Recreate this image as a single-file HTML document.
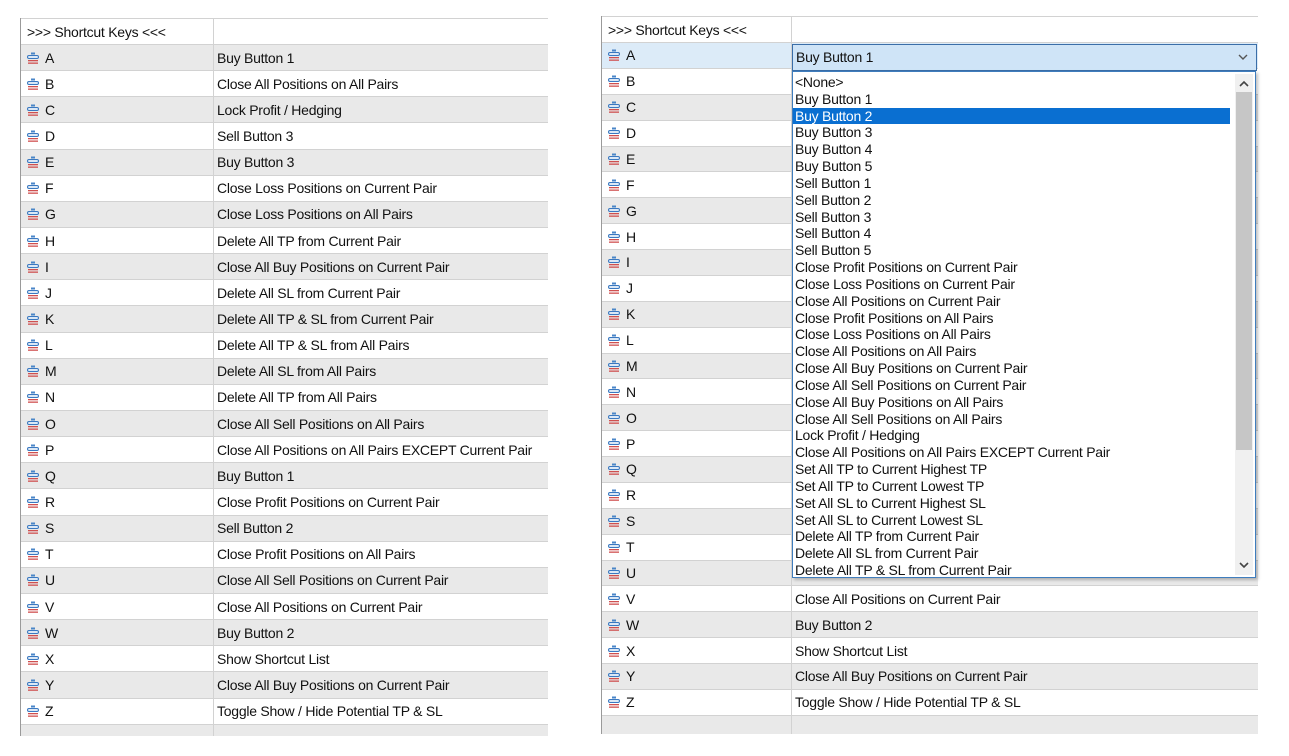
<!DOCTYPE html>
<html><head><meta charset="utf-8"><style>
body{margin:0;width:1289px;height:756px;background:#fff;position:relative;overflow:hidden;font-family:"Liberation Sans",sans-serif;font-size:14px;color:#111;letter-spacing:-0.25px}
.tbl{position:absolute;border-left:1px solid #9a9a9a}
.r{display:flex;border-bottom:1px solid #d2d2d2;box-sizing:border-box}
.r:nth-child(even){background:#e9e9e9}
.c1{border-right:1px solid #d2d2d2;box-sizing:border-box;display:flex;align-items:center;padding-left:6px}
.c2{display:flex;align-items:center;padding-left:3px}
.ic{width:12px;height:12px;margin-right:6px;flex:none}
.h{background:#fff!important;border-top:1px solid #d2d2d2}
.sel{background:#dcebf8!important}
#dd{position:absolute;left:792px;top:71px;width:464px;height:507px;background:#fff;border:1px solid #3f7dbd;box-sizing:border-box;box-shadow:2px 2px 3px rgba(0,0,0,.25)}
#dd div.i{height:16.83px;line-height:16.83px;padding-left:2px;width:437px;box-sizing:border-box;white-space:nowrap}
#dd div.s{background:#0a6fd1;color:#fff}
#cb{position:absolute;left:792px;top:44px;width:465px;height:27px;background:#cfe4f7;border:1px solid #3a6ea8;box-sizing:border-box;padding-left:3px;line-height:25px}
</style></head><body>
<svg width="0" height="0" style="position:absolute"><defs><g id="k"><rect x="4" y="0.5" width="4" height="2" fill="#4a86c8"/><rect x="0.5" y="3.5" width="11" height="3" rx="1.5" fill="#dbe8f6" stroke="#3a78c0"/><rect x="1" y="8" width="10" height="1.3" fill="#d05050"/><rect x="1" y="10.5" width="10" height="1.3" fill="#d05050"/></g></defs></svg>

<div class="tbl" style="left:20px;top:18px;width:527px">
<div class="r h" style="height:27px"><div class="c1" style="width:193px">&gt;&gt;&gt; Shortcut Keys &lt;&lt;&lt;</div><div class="c2"></div></div>
<div class="r" style="height:26.15px"><div class="c1" style="width:193px"><svg class="ic"><use href="#k"/></svg>A</div><div class="c2">Buy Button 1</div></div>
<div class="r" style="height:26.15px"><div class="c1" style="width:193px"><svg class="ic"><use href="#k"/></svg>B</div><div class="c2">Close All Positions on All Pairs</div></div>
<div class="r" style="height:26.15px"><div class="c1" style="width:193px"><svg class="ic"><use href="#k"/></svg>C</div><div class="c2">Lock Profit / Hedging</div></div>
<div class="r" style="height:26.15px"><div class="c1" style="width:193px"><svg class="ic"><use href="#k"/></svg>D</div><div class="c2">Sell Button 3</div></div>
<div class="r" style="height:26.15px"><div class="c1" style="width:193px"><svg class="ic"><use href="#k"/></svg>E</div><div class="c2">Buy Button 3</div></div>
<div class="r" style="height:26.15px"><div class="c1" style="width:193px"><svg class="ic"><use href="#k"/></svg>F</div><div class="c2">Close Loss Positions on Current Pair</div></div>
<div class="r" style="height:26.15px"><div class="c1" style="width:193px"><svg class="ic"><use href="#k"/></svg>G</div><div class="c2">Close Loss Positions on All Pairs</div></div>
<div class="r" style="height:26.15px"><div class="c1" style="width:193px"><svg class="ic"><use href="#k"/></svg>H</div><div class="c2">Delete All TP from Current Pair</div></div>
<div class="r" style="height:26.15px"><div class="c1" style="width:193px"><svg class="ic"><use href="#k"/></svg>I</div><div class="c2">Close All Buy Positions on Current Pair</div></div>
<div class="r" style="height:26.15px"><div class="c1" style="width:193px"><svg class="ic"><use href="#k"/></svg>J</div><div class="c2">Delete All SL from Current Pair</div></div>
<div class="r" style="height:26.15px"><div class="c1" style="width:193px"><svg class="ic"><use href="#k"/></svg>K</div><div class="c2">Delete All TP &amp; SL from Current Pair</div></div>
<div class="r" style="height:26.15px"><div class="c1" style="width:193px"><svg class="ic"><use href="#k"/></svg>L</div><div class="c2">Delete All TP &amp; SL from All Pairs</div></div>
<div class="r" style="height:26.15px"><div class="c1" style="width:193px"><svg class="ic"><use href="#k"/></svg>M</div><div class="c2">Delete All SL from All Pairs</div></div>
<div class="r" style="height:26.15px"><div class="c1" style="width:193px"><svg class="ic"><use href="#k"/></svg>N</div><div class="c2">Delete All TP from All Pairs</div></div>
<div class="r" style="height:26.15px"><div class="c1" style="width:193px"><svg class="ic"><use href="#k"/></svg>O</div><div class="c2">Close All Sell Positions on All Pairs</div></div>
<div class="r" style="height:26.15px"><div class="c1" style="width:193px"><svg class="ic"><use href="#k"/></svg>P</div><div class="c2">Close All Positions on All Pairs EXCEPT Current Pair</div></div>
<div class="r" style="height:26.15px"><div class="c1" style="width:193px"><svg class="ic"><use href="#k"/></svg>Q</div><div class="c2">Buy Button 1</div></div>
<div class="r" style="height:26.15px"><div class="c1" style="width:193px"><svg class="ic"><use href="#k"/></svg>R</div><div class="c2">Close Profit Positions on Current Pair</div></div>
<div class="r" style="height:26.15px"><div class="c1" style="width:193px"><svg class="ic"><use href="#k"/></svg>S</div><div class="c2">Sell Button 2</div></div>
<div class="r" style="height:26.15px"><div class="c1" style="width:193px"><svg class="ic"><use href="#k"/></svg>T</div><div class="c2">Close Profit Positions on All Pairs</div></div>
<div class="r" style="height:26.15px"><div class="c1" style="width:193px"><svg class="ic"><use href="#k"/></svg>U</div><div class="c2">Close All Sell Positions on Current Pair</div></div>
<div class="r" style="height:26.15px"><div class="c1" style="width:193px"><svg class="ic"><use href="#k"/></svg>V</div><div class="c2">Close All Positions on Current Pair</div></div>
<div class="r" style="height:26.15px"><div class="c1" style="width:193px"><svg class="ic"><use href="#k"/></svg>W</div><div class="c2">Buy Button 2</div></div>
<div class="r" style="height:26.15px"><div class="c1" style="width:193px"><svg class="ic"><use href="#k"/></svg>X</div><div class="c2">Show Shortcut List</div></div>
<div class="r" style="height:26.15px"><div class="c1" style="width:193px"><svg class="ic"><use href="#k"/></svg>Y</div><div class="c2">Close All Buy Positions on Current Pair</div></div>
<div class="r" style="height:26.15px"><div class="c1" style="width:193px"><svg class="ic"><use href="#k"/></svg>Z</div><div class="c2">Toggle Show / Hide Potential TP &amp; SL</div></div>
<div class="r" style="height:11px;background:#e9e9e9;border-bottom:none"><div class="c1" style="width:193px"></div></div>
</div>

<div class="tbl" style="left:601px;top:16px;width:656px">
<div class="r h" style="height:27px"><div class="c1" style="width:190px">&gt;&gt;&gt; Shortcut Keys &lt;&lt;&lt;</div><div class="c2"></div></div>
<div class="r sel" style="height:25.88px"><div class="c1" style="width:190px"><svg class="ic"><use href="#k"/></svg>A</div><div class="c2">Buy Button 1</div></div>
<div class="r" style="height:25.88px"><div class="c1" style="width:190px"><svg class="ic"><use href="#k"/></svg>B</div><div class="c2"></div></div>
<div class="r" style="height:25.88px"><div class="c1" style="width:190px"><svg class="ic"><use href="#k"/></svg>C</div><div class="c2"></div></div>
<div class="r" style="height:25.88px"><div class="c1" style="width:190px"><svg class="ic"><use href="#k"/></svg>D</div><div class="c2"></div></div>
<div class="r" style="height:25.88px"><div class="c1" style="width:190px"><svg class="ic"><use href="#k"/></svg>E</div><div class="c2"></div></div>
<div class="r" style="height:25.88px"><div class="c1" style="width:190px"><svg class="ic"><use href="#k"/></svg>F</div><div class="c2"></div></div>
<div class="r" style="height:25.88px"><div class="c1" style="width:190px"><svg class="ic"><use href="#k"/></svg>G</div><div class="c2"></div></div>
<div class="r" style="height:25.88px"><div class="c1" style="width:190px"><svg class="ic"><use href="#k"/></svg>H</div><div class="c2"></div></div>
<div class="r" style="height:25.88px"><div class="c1" style="width:190px"><svg class="ic"><use href="#k"/></svg>I</div><div class="c2"></div></div>
<div class="r" style="height:25.88px"><div class="c1" style="width:190px"><svg class="ic"><use href="#k"/></svg>J</div><div class="c2"></div></div>
<div class="r" style="height:25.88px"><div class="c1" style="width:190px"><svg class="ic"><use href="#k"/></svg>K</div><div class="c2"></div></div>
<div class="r" style="height:25.88px"><div class="c1" style="width:190px"><svg class="ic"><use href="#k"/></svg>L</div><div class="c2"></div></div>
<div class="r" style="height:25.88px"><div class="c1" style="width:190px"><svg class="ic"><use href="#k"/></svg>M</div><div class="c2"></div></div>
<div class="r" style="height:25.88px"><div class="c1" style="width:190px"><svg class="ic"><use href="#k"/></svg>N</div><div class="c2"></div></div>
<div class="r" style="height:25.88px"><div class="c1" style="width:190px"><svg class="ic"><use href="#k"/></svg>O</div><div class="c2"></div></div>
<div class="r" style="height:25.88px"><div class="c1" style="width:190px"><svg class="ic"><use href="#k"/></svg>P</div><div class="c2"></div></div>
<div class="r" style="height:25.88px"><div class="c1" style="width:190px"><svg class="ic"><use href="#k"/></svg>Q</div><div class="c2"></div></div>
<div class="r" style="height:25.88px"><div class="c1" style="width:190px"><svg class="ic"><use href="#k"/></svg>R</div><div class="c2"></div></div>
<div class="r" style="height:25.88px"><div class="c1" style="width:190px"><svg class="ic"><use href="#k"/></svg>S</div><div class="c2"></div></div>
<div class="r" style="height:25.88px"><div class="c1" style="width:190px"><svg class="ic"><use href="#k"/></svg>T</div><div class="c2"></div></div>
<div class="r" style="height:25.88px"><div class="c1" style="width:190px"><svg class="ic"><use href="#k"/></svg>U</div><div class="c2">Close All Sell Positions on Current Pair</div></div>
<div class="r" style="height:25.88px"><div class="c1" style="width:190px"><svg class="ic"><use href="#k"/></svg>V</div><div class="c2">Close All Positions on Current Pair</div></div>
<div class="r" style="height:25.88px"><div class="c1" style="width:190px"><svg class="ic"><use href="#k"/></svg>W</div><div class="c2">Buy Button 2</div></div>
<div class="r" style="height:25.88px"><div class="c1" style="width:190px"><svg class="ic"><use href="#k"/></svg>X</div><div class="c2">Show Shortcut List</div></div>
<div class="r" style="height:25.88px"><div class="c1" style="width:190px"><svg class="ic"><use href="#k"/></svg>Y</div><div class="c2">Close All Buy Positions on Current Pair</div></div>
<div class="r" style="height:25.88px"><div class="c1" style="width:190px"><svg class="ic"><use href="#k"/></svg>Z</div><div class="c2">Toggle Show / Hide Potential TP &amp; SL</div></div>
<div class="r" style="height:18px;background:#e9e9e9;border-bottom:none"><div class="c1" style="width:190px"></div></div>
</div>

<div id="cb">Buy Button 1<svg style="position:absolute;right:8px;top:9px" width="10" height="7"><path d="M1 1 L5 5 L9 1" fill="none" stroke="#555" stroke-width="1.4"/></svg></div>
<div id="dd">
<div style="height:2px"></div>
<div class="i">&lt;None&gt;</div>
<div class="i">Buy Button 1</div>
<div class="i s">Buy Button 2</div>
<div class="i">Buy Button 3</div>
<div class="i">Buy Button 4</div>
<div class="i">Buy Button 5</div>
<div class="i">Sell Button 1</div>
<div class="i">Sell Button 2</div>
<div class="i">Sell Button 3</div>
<div class="i">Sell Button 4</div>
<div class="i">Sell Button 5</div>
<div class="i">Close Profit Positions on Current Pair</div>
<div class="i">Close Loss Positions on Current Pair</div>
<div class="i">Close All Positions on Current Pair</div>
<div class="i">Close Profit Positions on All Pairs</div>
<div class="i">Close Loss Positions on All Pairs</div>
<div class="i">Close All Positions on All Pairs</div>
<div class="i">Close All Buy Positions on Current Pair</div>
<div class="i">Close All Sell Positions on Current Pair</div>
<div class="i">Close All Buy Positions on All Pairs</div>
<div class="i">Close All Sell Positions on All Pairs</div>
<div class="i">Lock Profit / Hedging</div>
<div class="i">Close All Positions on All Pairs EXCEPT Current Pair</div>
<div class="i">Set All TP to Current Highest TP</div>
<div class="i">Set All TP to Current Lowest TP</div>
<div class="i">Set All SL to Current Highest SL</div>
<div class="i">Set All SL to Current Lowest SL</div>
<div class="i">Delete All TP from Current Pair</div>
<div class="i">Delete All SL from Current Pair</div>
<div class="i">Delete All TP &amp; SL from Current Pair</div>
<div style="position:absolute;right:2px;top:2px;width:18px;height:501px;background:#f0f0f0">
<svg style="position:absolute;left:4px;top:6px" width="10" height="7"><path d="M1 6 L5 2 L9 6" fill="none" stroke="#444" stroke-width="1.6"/></svg>
<div style="position:absolute;left:1px;top:18px;width:16px;height:358px;background:#c6c6c6"></div>
<svg style="position:absolute;left:4px;top:488px" width="10" height="7"><path d="M1 1 L5 5 L9 1" fill="none" stroke="#444" stroke-width="1.6"/></svg>
</div>
</div>
</body></html>
